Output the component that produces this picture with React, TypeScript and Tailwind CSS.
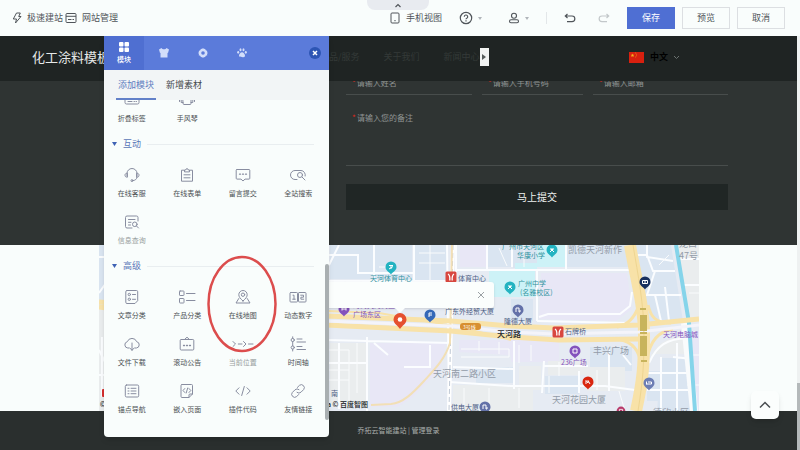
import { useState } from 'react'
import type { ReactNode } from 'react'

interface ModuleItem {
  label: string
  icon: ReactNode
  muted?: boolean
}

const icons = {
  fold: (
    <>
      <rect x="1" y="4" width="14" height="8" rx="1.5" />
      <path d="M4 9.5h4M10 9.5h.5M12 9.5h.5" />
    </>
  ),
  accordion: (
    <>
      <path d="M4 3h8v8.5a1 1 0 0 1-1 1H5a1 1 0 0 1-1-1z" />
      <path d="M2.2 5v5.5H4M13.8 5v5.5H12M.5 7v2.5M15.5 7v2.5" />
    </>
  ),
  headset: (
    <>
      <path d="M3 9V6.500a5 5 0 0 1 10 0V9" />
      <path d="M3 6.200c-1.200 0-2 .7-2 2s.8 2 2 2zM13 6.200c1.200 0 2 .7 2 2s-.8 2-2 2z" />
      <path d="M13 10.200c-.3 2-1.600 3.200-4 3.400" />
      <circle cx="8" cy="13.600" r="1" />
    </>
  ),
  clipboard: (
    <>
      <path d="M5 3.200H2.500v11h11v-11H11" />
      <path d="M5.500 4.500v-1.500h1.200a1.300 1.300 0 0 1 2.600 0h1.200v1.500z" />
      <path d="M5 7.800h6M5 10.800h6" />
    </>
  ),
  message: (
    <>
      <path d="M2 2.500h12a.8.8 0 0 1 .8.8v8a.8.8 0 0 1-.8.8h-4L8 14l-2-1.900H2a.8.8 0 0 1-.8-.8v-8a.8.8 0 0 1 .8-.8z" />
      <path d="M4.500 7.200h1M7.500 7.200h1M10.500 7.200h1" strokeWidth="1.300" />
    </>
  ),
  search: (
    <>
      <path d="M7 12.500H5a4.500 4.500 0 0 1 0-9h6a4.500 4.500 0 0 1 4.200 5.500" />
      <circle cx="10" cy="8" r="2.500" />
      <path d="m12 10 3 3" />
    </>
  ),
  query: (
    <>
      <path d="M8 14H3a1.500 1.500 0 0 1-1.500-1.500v-9A1.500 1.500 0 0 1 3 2h9.500A1.500 1.500 0 0 1 14 3.500V7" />
      <path d="M4.500 5.500H11M4.500 8.300H7M4.500 11h2" />
      <circle cx="10.800" cy="10.300" r="2.300" />
      <path d="m12.500 12 2 2" />
    </>
  ),
  article: (
    <>
      <path d="M3 1.500h9.500a1.200 1.200 0 0 1 1.200 1.200v9l-2.700 2.800H3a1.200 1.200 0 0 1-1.200-1.200V2.700A1.200 1.200 0 0 1 3 1.500z" />
      <circle cx="5.300" cy="5.500" r="1.200" />
      <circle cx="5.300" cy="10.300" r="1.200" />
      <path d="M8.500 5.500h3M8.500 10.300h3" />
    </>
  ),
  product: (
    <>
      <rect x=".5" y="2" width="4.500" height="4.500" rx=".6" />
      <rect x=".5" y="9.500" width="4.500" height="4.500" rx=".6" />
      <path d="M7.500 4.500H16M7.500 11.500H16" />
    </>
  ),
  location: (
    <>
      <path d="M8 12c-2.800-2.500-4.200-4.300-4.200-6.300a4.200 4.200 0 0 1 8.400 0C12.200 7.700 10.800 9.500 8 12z" />
      <circle cx="8" cy="5.700" r="1.700" />
      <path d="M3.800 9.500 1 14h14l-2.800-4.500" />
    </>
  ),
  digits: (
    <>
      <rect x="0" y="3.500" width="7.500" height="9.500" rx=".8" />
      <rect x="8.500" y="3.500" width="7.500" height="9.500" rx=".8" />
      <path d="M3 6.200h1v4M2.700 10.200h2.600M10.700 6.200h2.800v2h-2.600v2h2.800" />
    </>
  ),
  cloud: (
    <>
      <path d="M5 12H3.800A3.200 3.200 0 0 1 3.300 5.700 5 5 0 0 1 12.700 5.700 3.200 3.200 0 0 1 12.400 12H11" />
      <path d="M8 7v7.300M5.800 12 8 14.300 10.200 12" />
    </>
  ),
  notice: (
    <>
      <rect x="1.200" y="3.500" width="13.600" height="10.500" rx="1" />
      <path d="M5.500 3.500 8 1.200l2.500 2.300" />
      <path d="M4.500 9.500h1M7.500 9.500h1M10.500 9.500h1" strokeWidth="1.300" />
    </>
  ),
  crumbs: <path d="m-2 5.500 2.500 2.500L-2 10.500M3.300 8H7M8.500 5.500 11 8l-2.500 2.500M13.500 8H18" />,
  timeline: (
    <>
      <circle cx="2.700" cy="4" r="1.600" />
      <circle cx="2.700" cy="11.500" r="1.600" />
      <path d="M2.700.8v1.600M2.700 5.600v4.300M2.700 13.100V15M7 3h5M7 6h8.500M7 10.500h5M7 13.500h8.500" />
    </>
  ),
  anchor: (
    <>
      <rect x="1.300" y="2" width="13.400" height="12" rx="1.300" />
      <path d="M4 5.300h1M4 8h1M4 10.700h1M7 5.300h5M7 8h5M7 10.700h5" />
    </>
  ),
  embed: (
    <>
      <path d="M3 1.500h9.500a1 1 0 0 1 1 1V11L10 14.500H3a1 1 0 0 1-1-1v-11a1 1 0 0 1 1-1z" />
      <path d="M13.500 11H11a1 1 0 0 0-1 1v2.500M5.800 5.500 4 7.500l1.800 2M10 5.500l1.800 2-1.800 2M8.700 5 7.200 10" />
    </>
  ),
  code: <path d="M4 4.800.8 8 4 11.200M12 4.800 15.200 8 12 11.200M9.300 3.500 6.700 12.500" />,
  link: (
    <path d="M7.300 4.500 9.500 2.300a3 3 0 0 1 4.200 4.200L11 9.200a3 3 0 0 1-4 .2M8.700 11.500l-2.200 2.200a3 3 0 0 1-4.200-4.200L5 6.800a3 3 0 0 1 4-.2" />
  ),
}

const basicModules: ModuleItem[] = [
  { label: '折叠标签', icon: icons.fold },
  { label: '手风琴', icon: icons.accordion },
]

const interactModules: ModuleItem[] = [
  { label: '在线客服', icon: icons.headset },
  { label: '在线表单', icon: icons.clipboard },
  { label: '留言提交', icon: icons.message },
  { label: '全站搜索', icon: icons.search },
  { label: '信息查询', icon: icons.query, muted: true },
]

const advancedModules: ModuleItem[] = [
  { label: '文章分类', icon: icons.article },
  { label: '产品分类', icon: icons.product },
  { label: '在线地图', icon: icons.location },
  { label: '动态数字', icon: icons.digits },
  { label: '文件下载', icon: icons.cloud },
  { label: '滚动公告', icon: icons.notice },
  { label: '当前位置', icon: icons.crumbs, muted: true },
  { label: '时间轴', icon: icons.timeline },
  { label: '锚点导航', icon: icons.anchor },
  { label: '嵌入页面', icon: icons.embed },
  { label: '插件代码', icon: icons.code },
  { label: '友情链接', icon: icons.link },
]

function Caret() {
  return (
    <svg viewBox="0 0 4 3" className="h-[3px] w-1 fill-[#b0b5ba]">
      <path d="M0 0h4L2 3z" />
    </svg>
  )
}

function TopBar() {
  return (
    <header className="relative flex h-9 shrink-0 items-center bg-[#f9fdfc] pr-[15px] pl-3 text-[9px] text-[#50555a]">
      <button type="button" className="flex items-center gap-[5px]">
        <svg viewBox="0 0 10 12" className="h-3 w-[10px] fill-none stroke-[#50555a]" strokeLinejoin="round">
          <path d="M4.500 1h3.800L6.700 4.500H9L3.500 11l1-4H1.300z" />
        </svg>
        极速建站
      </button>
      <button type="button" className="ml-[2px] flex items-center gap-[5px]">
        <svg viewBox="0 0 12 12" className="h-3 w-3 fill-none stroke-[#50555a]">
          <rect x="1" y="1.500" width="10" height="9" rx="1" />
          <path d="M1 4.300h10M3 7.500h3.500M7.500 7.500H9" />
        </svg>
        网站管理
      </button>

      <button
        type="button"
        aria-label="收起"
        className="absolute top-0 left-1/2 flex h-[10px] w-[62px] -translate-x-[33px] items-center justify-center rounded-b-lg bg-[#e8ebf0]"
      >
        <svg viewBox="0 0 8 5" className="h-[5px] w-2 fill-none stroke-[#50555a] stroke-[1.200]">
          <path d="M1.500 4 4 1.500 6.500 4" />
        </svg>
      </button>

      <div className="ml-auto flex items-center">
        <button type="button" className="flex items-center gap-[6px]">
          <svg viewBox="0 0 10 12" className="h-3 w-[10px] fill-none stroke-[#50555a]">
            <rect x="1" y="1" width="8" height="10" rx="1" />
            <path d="M4.300 8.700h1.400" />
          </svg>
          手机视图
        </button>
        <button type="button" aria-label="帮助" className="ml-[17px] flex items-center gap-[5px]">
          <svg viewBox="0 0 14 14" className="size-[14px] fill-none stroke-[#50555a] stroke-[1.200]">
            <circle cx="7" cy="7" r="5.700" />
            <path d="M5.300 5.700a1.700 1.700 0 1 1 2.500 1.500c-.6.300-.8.500-.8 1.100M7 9.300v1.100" />
          </svg>
          <Caret />
        </button>
        <button type="button" aria-label="账户" className="ml-[26px] flex items-center gap-[5px]">
          <svg viewBox="0 0 12 12" className="h-3 w-3 fill-none stroke-[#50555a] stroke-[1.100]">
            <circle cx="6" cy="3.800" r="2.500" />
            <path d="M3 7.800h6a1.500 1.500 0 0 1 0 3H3a1.500 1.500 0 0 1 0-3z" />
          </svg>
          <Caret />
        </button>
        <span className="ml-[17px] h-3 w-px bg-[#e3e7e9]" />
        <button type="button" aria-label="撤销" className="ml-[17px]">
          <svg viewBox="0 0 12 10" className="h-[10px] w-3 fill-none stroke-[#50555a] stroke-[1.200]">
            <path d="M3.500 1 1.300 3l2.200 2M1.500 3H8a2.800 2.800 0 0 1 0 5.700H3" />
          </svg>
        </button>
        <button type="button" aria-label="重做" className="ml-[22px]">
          <svg viewBox="0 0 12 10" className="h-[10px] w-3 fill-none stroke-[#c3c8ca] stroke-[1.200]">
            <path d="M8.500 1l2.200 2-2.200 2M10.500 3H4a2.800 2.800 0 0 0 0 5.700h5" />
          </svg>
        </button>
        <div className="ml-[17px] flex gap-[7px]">
          <button type="button" className="h-[22px] w-12 bg-[#4f6fd3] text-white">保存</button>
          <button type="button" className="h-[22px] w-12 border border-[#dcdfe2]">预览</button>
          <button type="button" className="h-[22px] w-12 border border-[#dcdfe2]">取消</button>
        </div>
      </div>
    </header>
  )
}

function SiteHeader() {
  return (
    <div className="flex h-[45px] shrink-0 items-center bg-[#1f2423] pr-[117px] pb-[3px] pl-8">
      <h1 className="text-[13px] text-[#e6e9e8]">化工涂料模板</h1>
      <nav className="ml-[210px] flex gap-6 text-[9px] whitespace-nowrap text-[#343a38]">
        <a href="#products">产品/服务</a>
        <a href="#about">关于我们</a>
        <a href="#news">新闻中心</a>
      </nav>
      <button type="button" aria-label="更多导航" className="flex h-[18px] w-[9px] items-center justify-center bg-[#f1f3f2]">
        <svg viewBox="0 0 4 6" className="h-[6px] w-1 fill-[#555b5a]">
          <path d="M0 0v6l4-3z" />
        </svg>
      </button>
      <button type="button" className="ml-auto flex items-center gap-[6px] text-[9px] font-bold text-black">
        <svg viewBox="0 0 15 11" className="h-[11px] w-[15px]">
          <rect width="15" height="11" fill="#d8200f" />
          <path d="m3.500 1.500.5 1.300h1.300l-1 .9.4 1.300-1.200-.8-1.200.8.400-1.300-1-.9H3z" fill="#f6b51e" />
          <path d="M6 1h.7M7 2.200h.7M7 3.800h.7M6 5h.7" stroke="#f6b51e" strokeWidth=".7" />
        </svg>
        中文
        <svg viewBox="0 0 7 5" className="-ml-px h-[5px] w-[7px] fill-none stroke-[#6b7270]">
          <path d="M1 1l2.500 2.500L6 1" />
        </svg>
      </button>
    </div>
  )
}

function Field({ label, type }: { label: string; type: string }) {
  return (
    <label className="flex h-[18px] items-center border-b border-[#484d4c] pb-[6px] pl-[6px] leading-3">
      <span className="w-[5px] text-[#e0281c]">*</span>
      <input
        type={type}
        aria-label={label}
        placeholder={label}
        className="h-3 w-full min-w-0 bg-transparent text-[#d0d4d3] outline-none placeholder:text-[#909594]"
      />
    </label>
  )
}

function MessageForm() {
  return (
    <section className="flex h-[164px] shrink-0 flex-col items-end justify-end overflow-hidden bg-[#2f3433] pr-[69px] pb-[35px]">
      <form className="w-[382px] text-[8px]" onSubmit={e => e.preventDefault()}>
        <div className="grid grid-cols-[126fr_101fr_135fr] gap-[10px]">
          <Field label="请输入姓名" type="text" />
          <Field label="请输入手机号码" type="tel" />
          <Field label="请输入邮箱" type="email" />
        </div>
        <label className="mt-[17px] flex h-[54px] border-b border-[#484d4c] pl-[6px] leading-3">
          <span className="w-[5px] text-[#e0281c]">*</span>
          <textarea
            aria-label="请输入您的备注"
            placeholder="请输入您的备注"
            className="w-full resize-none bg-transparent text-[#d0d4d3] outline-none placeholder:text-[#909594]"
          />
        </label>
        <button type="submit" className="mt-[18px] h-[26px] w-full bg-[#202625] pb-0.5 text-[10px] text-[#eef1f0]">
          马上提交
        </button>
      </form>
    </section>
  )
}

interface PinProps {
  x: number
  y: number
  color: string
  glyph?: string
  scale?: number
}

function Pin({ x, y, color, glyph = 'M-2 1.500V-1.500H2V1.500M-2 0H2', scale = 1 }: PinProps) {
  return (
    <g transform={`translate(${x} ${y}) scale(${scale})`}>
      <path d="M0 7.500C-1 5.500-5.500 4-5.500 0a5.500 5.500 0 0 1 11 0C5.500 4 1 5.500 0 7.500z" fill={color} />
      <path d={glyph} fill="none" stroke="#fff" />
    </g>
  )
}

function Metro({ x, y }: { x: number; y: number }) {
  return (
    <g transform={`translate(${x} ${y})`}>
      <rect x="-5.500" y="-5.500" width="11" height="11" rx="1.500" fill="#d8473f" />
      <path d="M-3-3C-1-2-1 1-1.200 3.500M3-3C1-2 1 1 1.200 3.500" fill="none" stroke="#fff" strokeWidth="1.300" />
    </g>
  )
}

function StreetMap() {
  return (
    <svg viewBox="0 0 600 166" className="block w-full" preserveAspectRatio="xMidYMid slice">
      <rect width="600" height="166" fill="#e6ebf3" />

      {/* blocks */}
      <g fill="#dae5f1">
        <path d="M0 0h125v62H0zM231 0h82v34h-82zM316 0h33v60h-33zM389 0h24v22h-24z" />
        <path d="M414 0h24v23h-24zM468 0h62l3 22h-65zM536 0h36l12 76-38 2z" />
        <path d="M412 54h22v22h-22zM446 131h34v18h-34zM491 102h42v24h-42zM377 122h38v16h-38z" />
        <path d="M548 126h13v30h-13zM562 113h26l4 53h-34z" />
      </g>
      <g fill="#e8e7f6">
        <path d="M361 0h26v22h-26zM442 28h86l5 36-16 12-77-2z" />
        <path d="M271 98h76l-6 27-28 28-14 9h-28zM360 95h92v18l-92-6zM412 97h48v20h-48zM591 86h9v80h-5z" />
      </g>
      <g fill="#eaedee">
        <path d="M0 64h125v102H0zM231 98h36v64h-36zM354 140h80v26h-80zM449 116h40v14h-40zM488 122h38v24h-38z" />
        <path d="M552 112c6-14 16-20 36-21v18h-36zM578 0h22v74h-10zM420 121h22v24h-22z" />
      </g>
      <g fill="#cdf2f7">
        <path d="M438 0h28v22h-28zM390 26h46v26h-46zM416 18h22v8h-22z" />
      </g>

      {/* minor streets */}
      <g fill="none" stroke="#fbfdff" strokeWidth="2">
        <path d="M227 36h125M315 0v36M348 0 350 166M357 0v60M388 0v24M357 25h178M438 24v52M227 95l125 3M268 92v74M227 118h40M240 98v66" />
        <path d="M305 122h26v-22M275 98l14 12M350 137l62 4h94l30 4M354 122l60 2M415 96v48M445 116l-2 32M445 121h44" />
        <path d="M438 76 530 78M440 72l9-3h72l10-8 2-14M467 0v24M413 0v22M227 10h32v18h56M240 0l-10 20M275 0v36" />
        <path d="M536 10h12l6 16h22M548 0v12l26 4M556 26l-8 24h34M566 42l4 34M556 50l6 26M580 14h20M584 40h16" />
        <path d="M550 118c8-18 18-24 38-25M548 128h46M562 112v54M578 98v68M548 145h48M574 112l20 2M480 126v22M510 104v42M524 110l8 10" />
        <path d="M0 12h7l6 40M0 48 7 38M0 105l7 14M0 130h8M3 92v60M120 0v166" />
      </g>
      <g fill="none" stroke="#f9fbfc">
        <path d="M234 36v26M246 36v26M227 46h56M262 36v22M280 22h16M320 8h26M320 18h26M331 0v36M400 3l8 18M425 0v22" />
        <path d="M230 105h20v20h-20M250 125v36M230 135h20M258 98v50M362 104h48v8h-48M380 96v10M400 97v12M365 143v20M390 143v20M420 143v20" />
        <path d="M420 100v18M432 100v16M450 131v17M460 117v14M498 125v20M520 146l6 20M560 20l10-10M590 48h10M588 110h12M588 140h12" />
      </g>

      <path d="M586 78 595 166" stroke="#f9fbfc" strokeWidth="8" />
      <path d="M577 0 590 78 596 166" fill="none" stroke="#85d4ea" strokeWidth="4" />

      {/* metro line */}
      <path d="M354 0 352 74 350 166" fill="none" stroke="#fff" strokeWidth="4" />
      <path d="M354 0 352 74 350 166" fill="none" stroke="#c0c9d5" strokeDasharray="5 3" />
      <path d="M353 0 351 98C346 114 336 124 325 136S304 158 292 159L272 160" fill="none" stroke="#f2dfb5" strokeWidth="2" />

      {/* avenues */}
      <g fill="none" stroke="#f8e2a8">
        <path d="M0 57 60 62 227 71 352 76 412 81 455 83 540 80 600 74" strokeWidth="5" />
        <path d="M0 62 60 70 227 80 352 86 412 92 460 95 540 94" strokeWidth="5" />
        <path d="M227 66 280 68 360 82 412 95" strokeWidth="2" />
        <path d="M531 0C536 30 545 60 545 90S544 135 537 166" strokeWidth="12" />
        <path d="M518 82C530 80 536 72 540 60M572 78C556 78 552 72 549 60M516 94C530 95 538 102 541 114M574 84C560 86 551 96 548 114" strokeWidth="3" />
      </g>
      <path d="M30 61 60 66 227 76 352 81 412 87 455 89 540 87 600 80" fill="none" stroke="#f4f4fa" strokeWidth="3" />
      <path d="M534 0C539 30 545 60 545 90S544 135 539 166" fill="none" stroke="#eed591" />
      <path d="M541 70h7v16h-7zM541 91h7v20h-7z" fill="#c8b45c" />
      <path d="M541 64h6M541 88h7M542 116h6" stroke="#c8b45c" strokeWidth="2" />
      <rect x="361" y="78" width="21" height="7" rx="3" fill="#d88f30" />

      {/* districts */}
      <g fill="#929ba8" className="text-[9px]">
        <text x="469" y="8">凯德天河新作</text>
        <text x="580" y="2">龙口</text>
        <text x="580" y="14">47号</text>
        <text x="334" y="132">天河南二路小区</text>
        <text x="494" y="109">丰兴广场</text>
        <text x="453" y="158">天河花园大厦</text>
        <text x="554" y="171">德欣小区</text>
      </g>
      <g fill="#2f93a0" className="text-[7px]">
        <text x="271" y="36">天河体育中心</text>
        <text x="403" y="4">广州市天河区</text>
        <text x="418" y="13">华康小学</text>
        <text x="419" y="41">广州中学</text>
        <text x="421" y="50">(名雅校区)</text>
      </g>
      <g fill="#4e5f86" className="text-[7px]">
        <text x="359" y="36">体育中心</text>
        <text x="346" y="69">广东外经贸大厦</text>
        <text x="405" y="79">隆德大厦</text>
        <text x="466" y="89">石牌桥</text>
        <text x="352" y="165">供电大厦</text>
        <text x="232" y="151">南</text>
      </g>
      <g fill="#8453bd" className="text-[7px]">
        <text x="254" y="63">时尚天河商业</text>
        <text x="254" y="72">广场东区</text>
        <text x="462" y="120">236广场</text>
        <text x="564" y="92">天河电脑城</text>
      </g>
      <text x="364" y="84" fill="#fff" className="text-[5px]">3号线</text>
      <text x="398" y="92" fill="#22262b" className="text-[8px] font-medium">天河路</text>
      <text x="228" y="162" fill="#14171a" className="text-[7px] font-medium">a © 百度智图</text>
      <rect x="3" y="144" width="12" height="8" rx="1" fill="#d62f2f" />
      <text x="1" y="162" fill="#14171a" className="text-[7px] font-medium">©</text>

      <Pin x={292} y={22} color="#23b3c1" glyph="M-2-1.500H2M0-1.500V2M-2 2 2-.5" />
      <Pin x={453} y={5} color="#23b3c1" glyph="M-2-1H2M-2 2 1-1M2 2-1-1" />
      <Pin x={411} y={42} color="#23b3c1" glyph="M-2-1H2M-2 2 1-1M2 2-1-1" />
      <Pin x={245} y={64} color="#8453bd" />
      <Pin x={476} y={106} color="#8453bd" glyph="M-2-2H2V2H-2z" />
      <Pin x={331} y={70} color="#3569b8" glyph="M-1 2V-2H2M-1 0H2" />
      <Pin x={419} y={65} color="#6371a8" glyph="M-2 2V-2H1V2H2V0" />
      <Pin x={386} y={162} color="#6371a8" glyph="M-2 2V-2H1V2H2V0" />
      <Pin x={550} y={138} color="#6b7db4" glyph="M-2.500 1.500V-1.500M-2.500 1H2.500V-1H-1" />
      <Pin x={546} y={37} color="#172f5e" glyph="M-2.500-1.500H2.500V1.500H-2.500zM0-1V1" />
      <Pin x={489} y={137} color="#d9260f" glyph="M-2 2V-1.500L0 1 0-1.500 2 2" />
      <Pin x={522} y={166} color="#b83a6b" glyph="M-2-2H2V2H-2z" scale={0.8} />
      <Metro x={352} y={32} />
      <Metro x={459} y={87} />
      <g transform="translate(301 75)">
        <path d="M0 9C-1.500 6-6.500 4-6.500-.5a6.500 6.500 0 0 1 13 0C6.500 4 1.500 6 0 9z" fill="#e5502f" />
        <circle r="2.300" cy="-.5" fill="#fff" />
      </g>
    </svg>
  )
}

function MapSection() {
  return (
    <section className="shrink-0 bg-[#f9fdfc]">
      <div className="relative mx-auto w-[600px] max-w-full overflow-hidden">
        <StreetMap />
        {/* info window */}
        <div className="absolute top-[37px] left-[207px] flex h-[26px] w-[188px] items-center justify-end rounded-[3px] bg-[#fbfefd] pr-[9px] shadow-sm">
          <button type="button" aria-label="关闭信息窗口">
            <svg viewBox="0 0 8 8" className="size-2 fill-none stroke-[#9ba1a5]">
              <path d="M1 1l6 6M7 1 1 7" />
            </svg>
          </button>
          <svg viewBox="0 0 10 5" className="absolute top-full left-1/2 h-[5px] w-[10px] -translate-x-1/2 fill-[#fbfefd]">
            <path d="M0 0h10L5 5z" />
          </svg>
        </div>
      </div>
    </section>
  )
}

function ModuleGrid({ items }: { items: ModuleItem[] }) {
  return (
    <ul className="grid shrink-0 grid-cols-4">
      {items.map(item => (
        <li key={item.label} className="h-[47px] pt-2">
          <button
            type="button"
            className={`flex w-full flex-col items-center gap-[5px] text-[7px] leading-[10px] ${item.muted ? 'text-[#989da0]' : 'text-[#4c5154]'}`}
          >
            <svg
              viewBox="0 0 16 16"
              className="size-4 overflow-visible fill-none stroke-[#888da0]"
              strokeLinecap="round"
              strokeLinejoin="round"
            >
              {item.icon}
            </svg>
            {item.label}
          </button>
        </li>
      ))}
    </ul>
  )
}

function GroupTitle({ children }: { children: string }) {
  return (
    <h2 className="flex h-7 shrink-0 items-center gap-[6px] pr-3 pb-0.5 pl-2 text-[9px] text-[#5a76b8]">
      <svg viewBox="0 0 5 4" className="h-1 w-[5px] fill-[#3f62b5]">
        <path d="M0 0h5L2.500 4z" />
      </svg>
      {children}
      <span className="h-px flex-1 bg-[#e9eef0]" />
    </h2>
  )
}

function ModulePanel() {
  const [tab, setTab] = useState('modules')

  return (
    <aside className="absolute top-9 bottom-[13px] left-[104px] flex w-[225px] flex-col overflow-hidden rounded-b bg-[#f9fdfc] shadow-md">
      <div className="flex h-[34px] shrink-0 items-center bg-[#5b7bda] pr-2 text-white">
        <button type="button" className="flex h-full w-10 flex-col items-center justify-center gap-[2px] bg-[#4f6fd1] text-[7px] leading-[10px] font-medium">
          <svg viewBox="0 0 10 10" className="size-[10px] fill-white">
            <rect width="4.500" height="4.500" rx="1" />
            <rect x="5.500" width="4.500" height="4.500" rx="1" />
            <rect y="5.500" width="4.500" height="4.500" rx="1" />
            <rect x="5.500" y="5.500" width="4.500" height="4.500" rx="1" />
          </svg>
          模块
        </button>
        <button type="button" aria-label="样式" className="flex w-[39px] justify-center">
          <svg viewBox="0 0 10 10" className="size-[10px] fill-[#d3defa]">
            <path d="M0 1.500 2.500 0C3.200 1.800 6.800 1.800 7.500 0L10 1.500 9 5 8.500 4.800V9.500h-7V4.800L1 5z" />
          </svg>
        </button>
        <button type="button" aria-label="设置" className="flex w-[39px] justify-center">
          <svg viewBox="0 0 10 10" className="size-[10px]">
            <path d="M3 .7 4 .9 5 0l1 .9 1-.2.8 1.500 1.500.7L9 4l.8 1L9 6l.3 1.200-1.500.6L7 9.300 6 9.100 5 10l-1-.9-1 .2-.8-1.500-1.500-.6L1 6 .2 5 1 4 .7 2.900l1.500-.7z" fill="#d3defa" />
            <circle cx="5" cy="5" r="1.800" fill="#5b7bda" />
          </svg>
        </button>
        <button type="button" aria-label="推广" className="flex w-[39px] justify-center">
          <svg viewBox="0 0 10 10" className="size-[10px] fill-[#d3defa]">
            <ellipse cx="1.200" cy="4.300" rx="1" ry="1.400" />
            <ellipse cx="3.500" cy="1.800" rx="1" ry="1.500" />
            <ellipse cx="6.500" cy="1.800" rx="1" ry="1.500" />
            <ellipse cx="8.800" cy="4.300" rx="1" ry="1.400" />
            <path d="M5 4.300c1.500 0 3 2 3 3.500S6.500 9.500 5 9 2 9.300 2 7.800s1.500-3.500 3-3.500z" />
          </svg>
        </button>
        <button type="button" aria-label="关闭" className="ml-auto flex size-3 items-center justify-center rounded-full bg-[#2d55b4]">
          <svg viewBox="0 0 6 6" className="size-[6px] fill-none stroke-white stroke-[1.500]">
            <path d="M1 1l4 4M5 1 1 5" />
          </svg>
        </button>
      </div>

      <div className="flex h-[30px] shrink-0 gap-2 bg-[#f2f5f6] pl-3 text-[9px]">
        <button
          type="button"
          onClick={() => setTab('modules')}
          className={`w-10 border-b-2 pt-0.5 ${tab === 'modules' ? 'border-[#6280c8] text-[#5f7dc0]' : 'border-transparent text-[#44494c]'}`}
        >
          添加模块
        </button>
        <button
          type="button"
          onClick={() => setTab('assets')}
          className={`w-10 border-b-2 pt-0.5 ${tab === 'assets' ? 'border-[#6280c8] text-[#5f7dc0]' : 'border-transparent text-[#44494c]'}`}
        >
          新增素材
        </button>
      </div>

      <div className="relative flex min-h-0 flex-1 flex-col justify-end overflow-hidden pr-[3px] pb-[15px]">
        <ModuleGrid items={basicModules} />
        <GroupTitle>互动</GroupTitle>
        <ModuleGrid items={interactModules} />
        <GroupTitle>高级</GroupTitle>
        <ModuleGrid items={advancedModules} />
        <span className="absolute right-0 bottom-[17px] h-[156px] w-1 rounded-full bg-[#a9afb1]" />
        {/* highlight around the map module */}
        <svg viewBox="0 0 70 98" className="pointer-events-none absolute right-[52px] bottom-[84px] h-[98px] w-[70px] fill-none stroke-[#dc4d4d] stroke-[2.500]">
          <ellipse cx="35" cy="49" rx="33.500" ry="47" />
        </svg>
      </div>
    </aside>
  )
}

export default function App() {
  return (
    <div className="relative flex min-h-screen flex-col overflow-hidden bg-[#f9fdfc] font-['Noto_Sans_CJK_SC',sans-serif]">
      <TopBar />
      <div className="flex flex-1">
        <main className="flex min-w-0 flex-1 flex-col">
          <SiteHeader />
          <MessageForm />
          <MapSection />
          <footer className="flex flex-1 items-center justify-center bg-[#2a2f2e] text-[7px] text-[#a9aeac]">
            <p>
              乔拓云智能建站 | <a href="#login">管理登录</a>
            </p>
          </footer>
        </main>
        <div className="flex w-[3px] flex-col justify-end bg-[#eef1f1]">
          <span className="h-[67px] bg-[#b4b9ba]" />
        </div>
      </div>
      <ModulePanel />
      <button
        type="button"
        aria-label="返回顶部"
        className="absolute right-[21px] bottom-[31px] flex size-7 items-center justify-center rounded-[5px] bg-[#fbfefd] shadow-md"
      >
        <svg viewBox="0 0 12 8" className="h-2 w-3 fill-none stroke-[#4a4f52] stroke-[1.500]">
          <path d="M1 6.500 6 1.500l5 5" />
        </svg>
      </button>
    </div>
  )
}
